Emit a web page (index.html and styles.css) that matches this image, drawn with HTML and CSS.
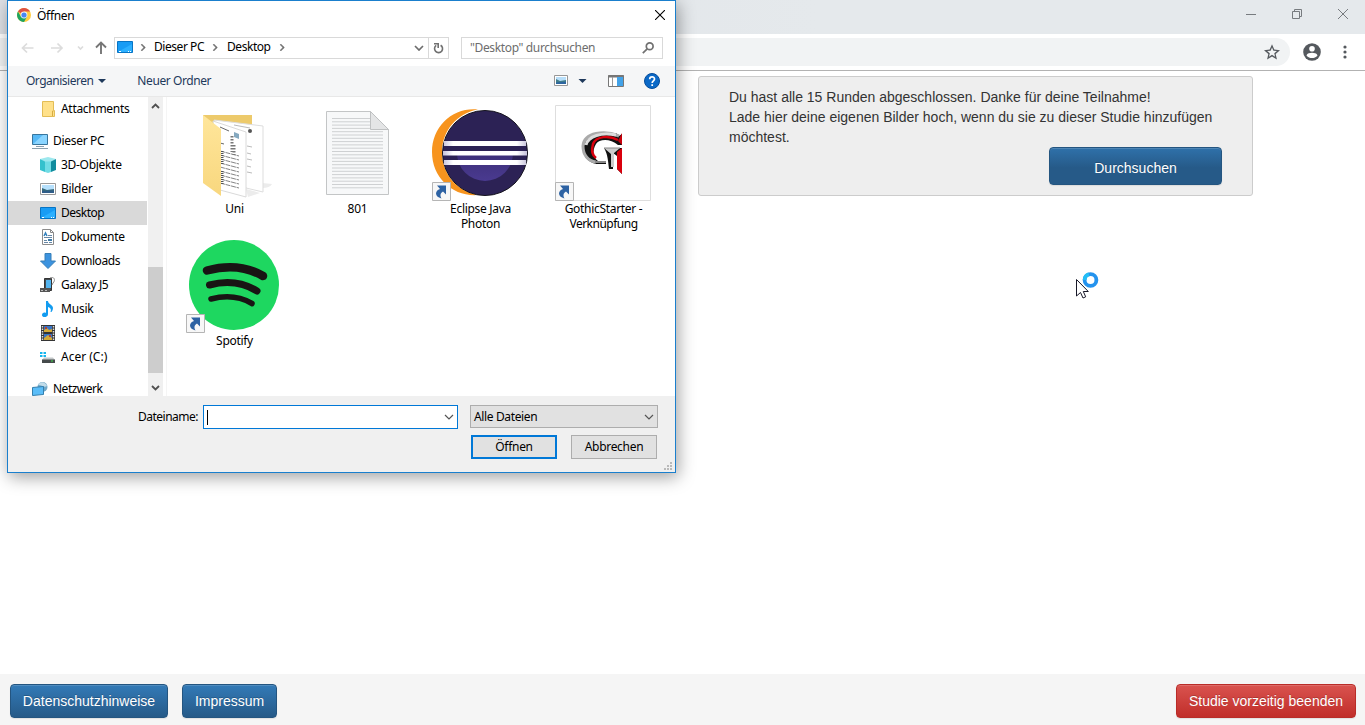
FILE: index.html
```html
<!DOCTYPE html>
<html lang="de">
<head>
<meta charset="utf-8">
<title>Studie</title>
<link rel="stylesheet" href="styles.css">
</head>
<body>
<div class="page">
  <div class="titlebar">
    <svg class="winctl" width="115" height="30" viewBox="0 0 115 30" fill="none" stroke="#777b7f"><path d="M1 14.500h10"/><path d="M47.500 11.500h7v7h-7z M49.500 11.500v-2h7v7h-2"/><path d="M93 9l10 10M103 9l-10 10"/></svg>
  </div>
  <div class="toolbar">
    <div class="omnibox"><svg width="16" height="16" viewBox="0 0 24 24" fill="#55595e"><path d="M24 9.200l-8.600-.8L12 .5 8.600 8.400 0 9.200l6.500 5.700L4.600 23.300 12 18.800l7.400 4.500-1.900-8.400L24 9.200zM12 16.300l-4.500 2.800 1.200-5.200-4-3.500 5.300-.4 2-4.900 2.100 4.900 5.300.4-4 3.500 1.200 5.200L12 16.300z"/></svg></div>
    <svg class="avatar" width="18" height="18" viewBox="0 0 18 18"><circle cx="9" cy="9" r="8.800" fill="#55595e"/><circle cx="9" cy="5.700" r="2.800" fill="#fff"/><path d="M3.500 12.400C4 10.400 7 9.800 9 9.800s5 .6 5.500 2.600C13 14.400 11 15 9 15s-4-.6-5.500-2.600z" fill="#fff"/></svg>
    <svg class="dots" width="4" height="14" viewBox="0 0 4 14" fill="#55595e"><circle cx="2" cy="2" r="1.600"/><circle cx="2" cy="7" r="1.600"/><circle cx="2" cy="12" r="1.600"/></svg>
  </div>
  <main class="content">
    <section class="panel">
      <p>Du hast alle 15 Runden abgeschlossen. Danke für deine Teilnahme!<br>Lade hier deine eigenen Bilder hoch, wenn du sie zu dieser Studie hinzufügen möchtest.</p>
      <button class="btn browse">Durchsuchen</button>
    </section>
  </main>
  <footer class="footer">
    <button class="btn privacy">Datenschutzhinweise</button>
    <button class="btn imprint">Impressum</button>
    <button class="btn danger">Studie vorzeitig beenden</button>
  </footer>
</div>

<div class="dialog">
  <header class="dlg-title">
    <svg width="14" height="14" viewBox="0 0 14 14"><circle cx="7" cy="7" r="7" fill="#ffcd40"/><path d="M7 7L.94 3.500A7 7 0 0 1 13.060 3.500H7z" fill="#dd5144"/><path d="M.94 3.500A7 7 0 0 0 7 14l3-5.200L4 8.800z" fill="#1da462"/><circle cx="7" cy="7" r="3.400" fill="#f4f4f4"/><circle cx="7" cy="7" r="2.600" fill="#4587f4"/></svg>
    <span>Öffnen</span>
    <svg class="close" width="10" height="10" viewBox="0 0 10 10" stroke="#000" stroke-width="1.100"><path d="M0 0l10 10M10 0L0 10"/></svg>
  </header>
  <nav class="dlg-nav">
    <svg class="arrows" width="87" height="16" viewBox="0 0 87 16" fill="none"><g stroke="#dcdcdc" stroke-width="1.700"><path d="M13.500 8H2.500M7 3.500L2.500 8 7 12.500M31 8h11M37.500 3.500L42 8l-4.500 4.500"/><path d="M58 6.500l2.500 2.500L63 6.500"/></g><path d="M81 14V3M76 7.500l5-5 5 5" stroke="#767676" stroke-width="1.900"/></svg>
    <div class="address">
      <svg width="16" height="12" viewBox="0 0 16 12"><path d="M.5.500h15v11H.5z" fill="#189cf5" stroke="#0874c4"/><path d="M1 11L15 3v8z" fill="#2cb0ff"/><path d="M2 10.500h2M11 10.500h1M13 10.500h1" stroke="#fff"/></svg>
      <i class="chev"></i><span class="dieser">Dieser PC</span><i class="chev"></i><span class="desk">Desktop</span><i class="chev"></i>
      <svg class="down" width="10" height="6" viewBox="0 0 10 6" fill="none" stroke="#6d6d6d" stroke-width="1.700"><path d="M1 1l4 4 4-4"/></svg>
    </div>
    <div class="refresh"><svg width="11" height="12" viewBox="0 0 11 12" fill="none" stroke="#707070" stroke-width="1.600"><path d="M7.600 3.200A4 4 0 1 1 3.200 3.400"/><path d="M1 1.800h4.200V6"/></svg></div>
    <div class="search"><span>"Desktop" durchsuchen</span><svg width="12" height="12" viewBox="0 0 12 12" fill="none" stroke="#717171" stroke-width="1.700"><circle cx="7.700" cy="4.300" r="3.400"/><path d="M5.200 6.800L.8 11.200"/></svg></div>
  </nav>
  <div class="dlg-tools">
    <span class="org">Organisieren</span><i class="tri"></i><span class="new">Neuer Ordner</span>
    <svg class="viewicons" width="108" height="18" viewBox="0 0 108 18"><path d="M1.500 3.500h13v10h-13z" fill="#fff" stroke="#979797"/><path d="M3 5h10v7H3z" fill="#b8dffa"/><path d="M3 7l4 2 6-1v4H3z" fill="#407c8a"/><path d="M3 10.500l10-.8V12H3z" fill="#2d65a0"/><path d="M25.500 7h8l-4 4z" fill="#1e395b"/><path d="M55.500 3.500h15v11h-15z" fill="#fff" stroke="#777"/><path d="M55 4.500h16" stroke="#777" stroke-width="2"/><path d="M59.500 5v9" stroke="#999"/><path d="M64 5h6v9h-6z" fill="#42a2e8"/><circle cx="99" cy="9" r="7.500" fill="#0b69c7" stroke="#064d9b"/><path d="M96.700 7.200c0-3 4.800-3 4.800-.2 0 1.800-2.300 1.900-2.300 4M99.200 12.300v1.600" fill="none" stroke="#fff" stroke-width="1.700"/></svg>
  </div>
  <div class="dlg-body">
    <aside class="tree">
      <div class="row sub"><svg width="16" height="16" viewBox="0 0 16 16"><path d="M2.500.500h11v9h1v6h-12z" fill="#ffe18a" stroke="#e3bd56"/><path d="M12.500 15V10h1" stroke="#d6ac42" fill="none"/></svg><span>Attachments</span></div>
      <div class="row top gap"><svg width="16" height="16" viewBox="0 0 16 16"><path d="M.5 1.500h15v10H.5z" fill="#57b9f6" stroke="#39769d"/><path d="M1 11L11 2h4v9z" fill="#8bd5ff"/><path d="M4 13.500h8M0 15.500h16" stroke="#8ba0ae"/></svg><span>Dieser PC</span></div>
      <div class="row sub"><svg width="16" height="16" viewBox="0 0 16 16"><path d="M0 2l8-2 8 2-5 3H5z" fill="#9de8ee"/><path d="M0 2l5 2.500V15l-5-2z" fill="#35c1cd"/><path d="M16 2l-5 2.500V15l5-2z" fill="#118c9e"/><path d="M5 4.500h6V15l-3 1-3-1z" fill="#71dce5"/></svg><span>3D-Objekte</span></div>
      <div class="row sub"><svg width="16" height="16" viewBox="0 0 16 16"><path d="M.5 2.500h15v11H.5z" fill="#fff" stroke="#999"/><path d="M2 4h12v8H2z" fill="#b6e0fc"/><path d="M2 7l5 2 7-1v4H2z" fill="#386a7b"/><path d="M2 10l12-.5V12H2z" fill="#2f5d89"/></svg><span>Bilder</span></div>
      <div class="row sub sel"><svg width="16" height="16" viewBox="0 0 16 16"><path d="M.5 2.500h15v11H.5z" fill="#189cf5" stroke="#0874c4"/><path d="M1 13l14-8v8z" fill="#2cb0ff"/><path d="M2 12.500h2M11 12.500h1M13 12.500h1" stroke="#fff"/></svg><span class="tight">Desktop</span></div>
      <div class="row sub"><svg width="16" height="16" viewBox="0 0 16 16"><path d="M2.500.500h8l3 3v12h-11z" fill="#fff" stroke="#8c8c8c"/><path d="M10.500.500v3h3" fill="none" stroke="#888"/><path d="M8 6.500h4M4 8.500h8M4 11.500h3M4 13.500h4M9 13.500h3" stroke="#6787a5"/><path d="M4 7l1.500-3L7 7" fill="none" stroke="#3280bc" stroke-width="1.500"/><path d="M8 10h4v2H8z" fill="#3b7aa8"/></svg><span>Dokumente</span></div>
      <div class="row sub"><svg width="16" height="16" viewBox="0 0 16 16"><path d="M5 .5h6V8h4.500L8 15.500.5 8H5z" fill="#3c93df" stroke="#377fb8"/></svg><span class="tight2">Downloads</span></div>
      <div class="row sub"><svg width="16" height="16" viewBox="0 0 16 16"><path d="M4.500 1.500h7v12h-7z" fill="#454b50" stroke="#333"/><path d="M6 3h5v8H6z" fill="#53b4ef"/><path d="M10 1c4-2 6 2 3 5l-1 2" fill="none" stroke="#888"/><path d="M0 11h10v4H0z" fill="#555"/><path d="M1 13.500h2M5 13.500h2" stroke="#bbb"/></svg><span class="tight2">Galaxy J5</span></div>
      <div class="row sub"><svg width="16" height="16" viewBox="0 0 16 16"><path d="M6 0h2c0 3 5 4 5 7 0 2-1 3-1.500 4h-1c1-3 0-4-2.500-5v7c0 4-6 4-6 1 0-2 2-3 4-2z" fill="#139cf0"/></svg><span class="wide">Musik</span></div>
      <div class="row sub"><svg width="16" height="16" viewBox="0 0 16 16"><path d="M1 0h14v16H1z" fill="#343434"/><path d="M2.500 1v14M13.500 1v14" stroke="#ddd" stroke-width="1.500" stroke-dasharray="1.500 1"/><path d="M4 1h8v6H4zM4 9h8v6H4z" fill="#3874c6"/><path d="M4 5l3-2 2 2 3-1v3H4zM4 13l4-3 4 3v2H4z" fill="#d4aa36"/><path d="M5 2h2v2H5zM9 10h2v2H9z" fill="#ae3e35"/></svg><span>Videos</span></div>
      <div class="row sub"><svg width="16" height="16" viewBox="0 0 16 16"><path d="M0 3h2.500v2H0zM3.500 3H6v2H3.500zM0 6h2.500v2H0zM3.500 6H6v2H3.500z" fill="#16b5ee"/><path d="M4 8.500h9l2 2.500H2z" fill="#c4c8c9"/><path d="M2 10.500h13V14H2z" fill="#454a4b"/><path d="M11 12h2" stroke="#3ddd4b"/></svg><span class="loose">Acer (C:)</span></div>
      <div class="row top gap"><svg width="16" height="16" viewBox="0 0 16 16"><circle cx="10.500" cy="6" r="5" fill="#71a8c7"/><path d="M6 4c3-5 8-2 9 1-3 2-5-1-9-1z" fill="#c2dce9"/><path d="M.5 6.500l11-1v8l-11 1z" fill="#5bbdf8" stroke="#347fad"/></svg><span class="tight">Netzwerk</span></div>
    </aside>
    <div class="scroll">
      <svg width="9" height="6" viewBox="0 0 9 6" fill="none" stroke="#505050" stroke-width="1.800"><path d="M1 5l3.500-3.500L8 5"/></svg>
      <div class="thumb"></div>
      <svg width="9" height="6" viewBox="0 0 9 6" fill="none" stroke="#505050" stroke-width="1.800"><path d="M1 1l3.500 3.500L8 1"/></svg>
    </div>
    <div class="files">
      <figure><svg width="96" height="96" viewBox="0 0 96 96">
        <defs><linearGradient id="fold" x2="0" y2="1"><stop stop-color="#ffe69b"/><stop offset="1" stop-color="#f8d77e"/></linearGradient></defs>
        <path d="M60 84l14 4-12 4zM76 78l10 1q-2 4-10 4z" fill="#ececec"/>
        <path d="M17 10h49v17H17z" fill="#edca6b"/><path d="M28 15l49 6v66l-17-4z" fill="#fff" stroke="#ddd"/>
        <path d="M48 20l16 3M61 41l5 1M61 48l4 1M61 54l5 1M61 61l4 1M61 67l5 1" stroke="#bbb"/><circle cx="64" cy="26" r="2" fill="#555"/>
        <path d="M27 16l33 11v65l-26-7z" fill="#fff" stroke="#dadada"/>
        <path d="M34 22l9 4M34 38l4 1" stroke="#666"/><path d="M48 27l5 2v5l-5-2z" fill="#85a9c0"/>
        <path d="M34 46l19 5M34 50l19 5M34 54l19 5M34 58l19 5M34 62l19 5M34 66l19 5M34 70l19 5M34 74l19 5M34 78l19 5" stroke="#858585" stroke-dasharray="5 .7"/><path d="M36 46v13M36 66v14" stroke="#555" stroke-width="3" stroke-dasharray="1 1"/><path d="M46 31v16M48 40v10" stroke="#777" stroke-width="3" stroke-dasharray="1.500 1.500"/>
        <path d="M17 10l18 14v67L17 78z" fill="url(#fold)"/></svg><figcaption>Uni</figcaption></figure>
      <figure><svg width="96" height="96" viewBox="0 0 96 96"><path d="M17.500 6.500h44l18 18v65h-62z" fill="#f7f8f9" stroke="#c3c5c6"/><path d="M23 13.500h38M23 16.800h38M23 20.100h38M23 23.400h38M23 26.700h51M23 30h51M23 33.300h51M23 36.600h51M23 39.900h51M23 43.200h51M23 46.500h51M23 49.800h51M23 53.100h51M23 56.400h51M23 59.700h51M23 63h51M23 66.300h51M23 69.600h51M23 72.900h51M23 76.200h51M23 79.500h51M23 82.800h51" stroke="#ced0d2"/><path d="M61.500 6.500l18 18h-18z" fill="#e4e5e6" stroke="#bfc1c2"/></svg><figcaption class="wide">801</figcaption></figure>
      <figure><svg width="96" height="96" viewBox="0 0 96 96">
        <defs><linearGradient id="ecl" x2="0" y2="1"><stop stop-color="#2f2560"/><stop offset="1" stop-color="#4a3a90"/></linearGradient><linearGradient id="bar"><stop stop-color="#c6c2dc"/><stop offset=".12" stop-color="#fff"/><stop offset=".88" stop-color="#fff"/><stop offset="1" stop-color="#c6c2dc"/></linearGradient></defs>
        <path d="M46 4.500C21 2 0 21 0 47s21 45 46 43C24 86 10 68 10 47S25 8 46 4.500z" fill="#f7941e"/>
        <circle cx="53" cy="48" r="42.500" fill="#2c2255" stroke="#15131e"/><circle cx="53" cy="48" r="28" fill="url(#ecl)"/><path d="M25 19h56v17H25z" fill="#2c2255"/>
        <path d="M12 41h82v5H12z" fill="#2c2255"/><path d="M12 36h82v5H12zM11 46h84v4.500H11zM12 55h82v5H12z" fill="url(#bar)"/>
        <g transform="translate(0 77)"><path d="M.5.500h18v18H.5z" fill="#f7f7f7" stroke="#b5b5b5"/><path d="M5 3.500h9v9l-3-3c-3 2-3 4-1.500 7C2 14.500 3 8.500 8 7z" fill="#2d62a3"/></g></svg><figcaption>Eclipse Java<br>Photon</figcaption></figure>
      <figure><svg width="96" height="96" viewBox="0 0 96 96"><path d="M.5.500h95v95H.5z" fill="#fff" stroke="#dedede"/>
        <path d="M67 29v11h-4c-8-7-19-6-22-1-4 7-3 13 2 17h8v3H41C32 57 27 50 28 41c1-9 8-13 16-13h17l3 3z" fill="#111"/>
        <path d="M64 31C50 25 29 27 28 41c0 9 5 15 13 16" fill="none" stroke="#aaa" stroke-width="3"/>
        <path d="M61 30C47 27 33 31 31 40" fill="none" stroke="#dcdcdc" stroke-width="3"/>
        <path d="M63 35c-9-5-22-4-25 4-2 7-1 11 3 14" fill="none" stroke="#d9000d" stroke-width="2.500"/>
        <path d="M67 28v12l-4-4z" fill="#c9000c"/>
        <path d="M49 43h18v26l-5-5V51l-4-3v16h-4c-1-8-1-14-5-21z" fill="#111"/>
        <path d="M62 47l5-4v26l-5-5z" fill="#d9000d"/><path d="M49 43h16l-6 5v14h-3V49z" fill="#ccc"/><path d="M49 43h16" stroke="#888"/><path d="M40 57h11" stroke="#888" stroke-width="2"/>
        <g transform="translate(0 77)"><path d="M.5.500h18v18H.5z" fill="#f7f7f7" stroke="#b5b5b5"/><path d="M5 3.500h9v9l-3-3c-3 2-3 4-1.500 7C2 14.500 3 8.500 8 7z" fill="#2d62a3"/></g></svg><figcaption>GothicStarter -<br><span class="tight">Verknüpfung</span></figcaption></figure>
      <figure><svg width="96" height="96" viewBox="0 0 96 96"><circle cx="48" cy="48" r="45" fill="#1ed760"/><g fill="none" stroke="#191414" stroke-linecap="round"><path d="M21 33.500Q53 25 77 39" stroke-width="8.500"/><path d="M23.500 48Q50 41 71 54" stroke-width="7"/><path d="M25 62Q48 56 66 66.500" stroke-width="5.500"/></g><g transform="translate(0 77)"><path d="M.5.500h18v18H.5z" fill="#f7f7f7" stroke="#b5b5b5"/><path d="M5 3.500h9v9l-3-3c-3 2-3 4-1.500 7C2 14.500 3 8.500 8 7z" fill="#2d62a3"/></g></svg><figcaption>Spotify</figcaption></figure>
    </div>
  </div>
  <div class="dlg-foot">
    <div class="line">
      <label class="tight">Dateiname:</label>
      <div class="input"><i class="caret"></i><svg width="10" height="6" viewBox="0 0 10 6" fill="none" stroke="#555" stroke-width="1.200"><path d="M1 1l4 4 4-4"/></svg></div>
      <div class="select"><span>Alle Dateien</span><svg width="10" height="6" viewBox="0 0 10 6" fill="none" stroke="#555" stroke-width="1.200"><path d="M1 1l4 4 4-4"/></svg></div>
    </div>
    <div class="actions"><button class="ok">Öffnen</button><button>Abbrechen</button></div>
    <svg class="grip" width="8" height="8" viewBox="0 0 8 8" fill="#b9b9b9"><path d="M0 6h2v2H0zM3 6h2v2H3zM6 6h2v2H6zM3 3h2v2H3zM6 3h2v2H6zM6 0h2v2H6z"/></svg>
  </div>
</div>

<svg class="cursor" width="26" height="30" viewBox="0 0 26 30"><circle cx="14.500" cy="9" r="5.900" fill="none" stroke="#2493ee" stroke-width="3.800"/><path d="M8.600 9A5.900 5.900 0 0 1 13 3.300" fill="none" stroke="#24bef6" stroke-width="3.800"/><path d="M.5 8.500v16.500l4-3.500 2.500 5.500 2.700-1.200L7.300 20.500h5z" fill="#fff" stroke="#181828"/></svg>
</body>
</html>
```
FILE: styles.css
```css
* { box-sizing: border-box; }
body { margin: 0; overflow: hidden; background: #fff; font-family: "Liberation Sans", Arial, sans-serif; font-size: 14px; color: #333; }
svg { display: block; flex: none; }
button { font: inherit; }
.page { height: 725px; display: flex; flex-direction: column; }
.titlebar { height: 34px; flex: none; background: linear-gradient(90deg, #dee1e6, #e5e9ec 60%); display: flex; justify-content: flex-end; }
.toolbar { height: 37px; flex: none; display: flex; align-items: center; border-bottom: 1px solid #b2b2b2; background: #fff; }
.omnibox { width: 1290px; height: 28px; border-radius: 0 14px 14px 0; background: #f1f3f4; display: flex; align-items: center; justify-content: flex-end; padding-right: 10px; }
.winctl { margin-right: 5px; }
.avatar { margin-left: 13px; }
.dots { margin-left: 21.500px; }
.content { flex: 1; padding: 5px 0 0 698px; }
.panel { width: 555px; height: 120px; border: 1px solid #ccc; border-radius: 3px; background: #eee; padding: 10px 30px; display: flex; flex-direction: column; }
.panel p { margin: 0; line-height: 20px; height: 60px; }
.btn { border: 1px solid #245580; border-radius: 4px; color: #fff; font-size: 14px; padding: 0; height: 34px; background: linear-gradient(#337ab7, #265a88); box-shadow: inset 0 1px 0 rgba(255,255,255,.15), 0 1px 1px rgba(0,0,0,.08); text-shadow: 0 -1px 0 rgba(0,0,0,.2); }
.browse { width: 173px; height: 38px; flex: none; align-self: flex-end; background: linear-gradient(#2f71aa, #265a88 55%); padding-top: 4px; }
.footer { height: 51px; flex: none; background: #f5f5f5; display: flex; align-items: center; padding: 2px 9px 0 10px; gap: 14px; }
.privacy { width: 158px; }
.imprint { width: 95px; }
.danger { width: 180px; margin-left: auto; border-color: #b92c28; background: linear-gradient(#d9534f, #c12e2a); }

.dialog { position: absolute; left: 7px; top: 0; width: 669px; height: 473px; border: 1px solid #1a7fcd; background: #fff; box-shadow: 2px 4px 16px rgba(0,0,0,.38); color: #000; font-family: "Noto Sans", sans-serif; font-size: 12px; display: flex; flex-direction: column; letter-spacing: -.3px; white-space: nowrap; }
.tight { letter-spacing: -.5px; }
.tight2 { letter-spacing: -.42px; }
.loose { letter-spacing: 0; }
.wide { letter-spacing: -.2px; }
.dlg-title { height: 36px; flex: none; display: flex; align-items: center; padding: 0 10px 8px 9px; gap: 6px; }
.dlg-title span { letter-spacing: -.3px; }
.close { margin-left: auto; }
.dlg-nav { height: 29px; flex: none; display: flex; align-items: flex-start; padding-left: 12px; }
.arrows { margin-top: 3px; }
.address { width: 315px; height: 22px; margin-left: 7px; border: 1px solid #d9d9d9; display: flex; align-items: center; padding: 0 4px 3px 2px; letter-spacing: -.45px; }
.chev { width: 5px; height: 5px; flex: none; border: solid #666; border-width: 1px 1px 0 0; box-shadow: .5px -.5px 0 #888; transform: rotate(45deg); margin: 1px 10px 0 6px; }
.dieser + .chev { margin-left: 7px; margin-right: 11px; }
.desk + .chev { margin-left: 7px; }
.down { margin: 3px 0 0 auto; }
.refresh { width: 20px; height: 22px; border: 1px solid #d9d9d9; border-left: 0; display: grid; place-items: center; }
.search { width: 202px; height: 22px; margin-left: 12px; border: 1px solid #d9d9d9; display: flex; justify-content: space-between; align-items: center; padding: 0 8px 1px; color: #6d6d6d; letter-spacing: -.36px; }
.dlg-tools { height: 31px; flex: none; background: #f5f6f7; border-bottom: 1px solid #e8e8e8; display: flex; align-items: center; padding: 0 14px 0 18px; color: #1e395b; letter-spacing: -.5px; }
.org { padding-bottom: 1px; }
.new { padding-bottom: 1px; letter-spacing: -.42px; }
.tri { border: solid transparent; border-width: 4px 4px 0; border-top-color: #1e395b; margin: 0 31px 0 5px; }
.viewicons { margin-left: auto; }
.dlg-body { height: 299px; flex: none; display: flex; overflow: hidden; }
.tree { width: 139px; overflow: hidden; margin-right: 1px; }
.row { height: 24px; display: flex; align-items: center; gap: 5px; }
.row span { padding-bottom: 2px; }
.row.sub { padding-left: 32px; }
.row.top { padding-left: 24px; }
.gap { margin-top: 8px; }
.sel { background: #d9d9d9; }
.scroll { width: 15px; background: #f0f0f0; padding: 6px 0 5px; display: flex; flex-direction: column; align-items: center; }
.thumb { width: 15px; height: 106px; background: #cdcdcd; margin: 158px 0 12px; }
.files { flex: 1; margin-left: 3px; border-left: 1px solid #f5f5f5; padding: 8px 0 0 6px; display: grid; grid-template-columns: repeat(4, 123px); grid-auto-rows: 132px; align-content: start; }
figure { margin: 0; display: flex; flex-direction: column; align-items: center; }
figure svg { margin-right: 1px; }
figcaption { line-height: 15px; text-align: center; }
.dlg-foot { flex: 1; background: #f0f0f0; padding: 9px 17px 0; position: relative; }
.line { display: flex; justify-content: flex-end; }
.line label { line-height: 23px; margin-right: 5px; }
.input { width: 255px; height: 24px; border: 1px solid #0078d7; background: #fff; display: flex; align-items: center; justify-content: space-between; padding: 0 3px; }
.caret { width: 1px; height: 15px; background: #000; }
.select { width: 188px; height: 23px; border: 1px solid #adadad; background: #e1e1e1; margin-left: 12px; display: flex; align-items: center; justify-content: space-between; padding: 0 3px; letter-spacing: -.36px; }
.actions { display: flex; justify-content: flex-end; gap: 14px; padding: 6px 1px 0 0; }
.actions button { width: 86px; height: 24px; padding: 0 0 1px; border: 1px solid #adadad; background: #e1e1e1; color: #000; letter-spacing: -.3px; }
.actions .ok { border: 2px solid #0078d7; }
.grip { position: absolute; right: 3px; bottom: 2px; }
.cursor { position: absolute; left: 1076px; top: 271px; }
```
